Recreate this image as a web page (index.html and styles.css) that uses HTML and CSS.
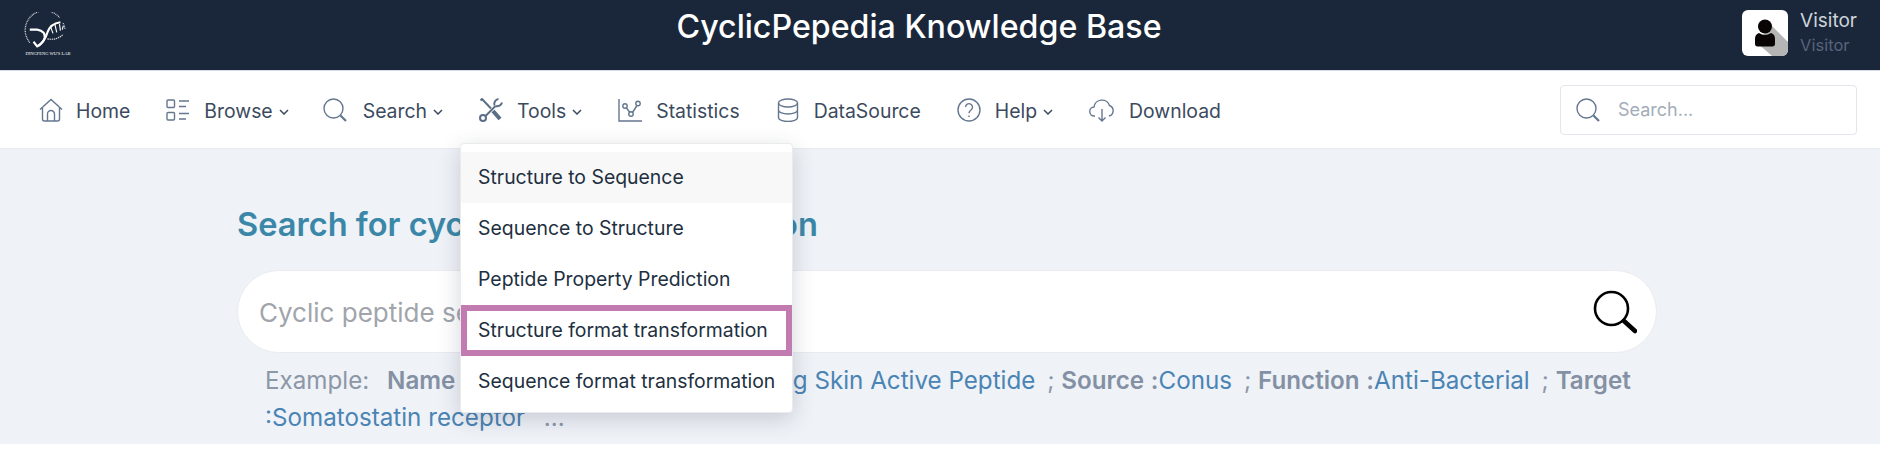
FILE: index.html

```html
<!DOCTYPE html>
<html lang="en">
<head>
  <meta charset="UTF-8">
  <title>CyclicPepedia Knowledge Base</title>
  <link rel="stylesheet" href="styles.css">
</head>
<body>
<div class="page">
  <header class="topbar">
    <div class="logo">
      <svg viewBox="0 0 52 42" width="49" height="39" fill="none" stroke="#fff">
        <path d="M8 33A20 20 0 0 1 40 6" stroke-width="1.400" stroke-dasharray="1 .8" opacity=".8"/>
        <path d="M44 12l2 6" stroke-width="1.400" stroke-dasharray="1 .8" opacity=".8"/>
        <path d="M8 19h8c6 1 9 4 8 9-1 4-4 7-8 9l-4-5" stroke-width="2.300"/>
        <path d="M16 37c5-3 9-8 11-15 2-6 6-10 14-11" stroke-width="2.300"/>
        <path d="M30 15l3 8M35 13l2 9M40 13l1 7M44 15l-1 4" stroke-width="1.200"/>
        <path d="M27 29c6 1 12 0 17-5" stroke-width="1.300" stroke-dasharray="1.500 .8" opacity=".85"/>
      </svg>
      <span class="logo-name">DingFeng Wu's LAB</span>
    </div>
    <div class="site-title">CyclicPepedia Knowledge Base</div>
    <div class="user">
      <svg class="avatar" viewBox="0 0 46 46" width="46" height="46">
        <rect width="46" height="46" rx="6" fill="#fff"/>
        <path d="M30 16 46 32V40a6 6 0 0 1-6 6H30L14 32Z" fill="#b5b5b5"/>
        <circle cx="23" cy="16.500" r="7" fill="#0a0505"/>
        <path d="M17 23c4 2.500 8 2.500 12 0 3 1 4 3 4 6v5c0 1.500-1 2.500-2.500 2.500h-15c-1.500 0-2.500-1-2.500-2.500v-5c0-3 1-5 4-6Z" fill="#0a0505"/>
      </svg>
      <div class="user-text">
        <div class="user-name">Visitor</div>
        <div class="user-role">Visitor</div>
      </div>
    </div>
  </header>

  <nav class="navbar">
    <ul class="menu">
      <li class="menu-item menu-home">
        <svg class="icon" viewBox="0 0 24 24"><path d="M1 11.500 12 1.500l11 10M3.500 10v11a2 2 0 0 0 2 2h13a2 2 0 0 0 2-2V10"/><path d="M8.500 23v-7a3.500 3.500 0 0 1 7 0v7"/></svg>
        <span>Home</span>
      </li>
      <li class="menu-item">
        <svg class="icon" viewBox="0 0 24 24"><rect x="1" y="2" width="7.500" height="7.500" rx="1"/><rect x="1" y="14.500" width="7.500" height="7.500" rx="1"/><path d="M13 3h10M13 8.500h7M13 15.500h10M13 21h7"/></svg>
        <span>Browse</span>
        <svg class="chevron" viewBox="0 0 10 6"><path d="M1 1l4 4 4-4"/></svg>
      </li>
      <li class="menu-item menu-search">
        <svg class="icon" viewBox="0 0 24 24"><circle cx="10.500" cy="10.500" r="9.500"/><path d="M17.500 17.500 23 23" stroke-width="2.200"/></svg>
        <span>Search</span>
        <svg class="chevron" viewBox="0 0 10 6"><path d="M1 1l4 4 4-4"/></svg>
      </li>
      <li class="menu-item menu-tools">
        <svg class="icon icon-tools" viewBox="0 0 24 24"><path d="M1.500 2.500 3 1l9 9.500"/><path d="M14 13l7 8" stroke-width="4"/><path d="M16.500 8 6 18.500"/><path d="M19.500 1a5 5 0 0 0-4 6.500M23 4.500a5 5 0 0 1-6.500 3.500"/><circle cx="4" cy="20" r="3"/></svg>
        <span>Tools</span>
        <svg class="chevron" viewBox="0 0 10 6"><path d="M1 1l4 4 4-4"/></svg>
        <div class="dropdown">
          <a class="dropdown-item is-hover">Structure to Sequence</a>
          <a class="dropdown-item">Sequence to Structure</a>
          <a class="dropdown-item">Peptide Property Prediction</a>
          <a class="dropdown-item is-marked">Structure format transformation</a>
          <a class="dropdown-item">Sequence format transformation</a>
        </div>
      </li>
      <li class="menu-item">
        <svg class="icon" viewBox="0 0 24 24"><path d="M1 1v22h23"/><path d="M8 9.500l4 5M14.500 14.500l4.500-7"/><circle cx="7" cy="8" r="2.200"/><circle cx="13" cy="16" r="2.200"/><circle cx="20" cy="5.500" r="2.200"/></svg>
        <span>Statistics</span>
      </li>
      <li class="menu-item">
        <svg class="icon" viewBox="0 0 24 24"><ellipse cx="12" cy="5" rx="9.500" ry="4"/><path d="M2.500 5v14.500c0 2.500 4.500 4 9.500 4s9.500-1.500 9.500-4V5M2.500 12c0 2.500 4.500 4 9.500 4s9.500-1.500 9.500-4"/></svg>
        <span>DataSource</span>
      </li>
      <li class="menu-item">
        <svg class="icon" viewBox="0 0 24 24"><circle cx="12" cy="12" r="11"/><path d="M8.500 9a3.500 3.500 0 1 1 5.500 3c-1.300 1-2 1.700-2 3.200M12 17.500v1.500"/></svg>
        <span>Help</span>
        <svg class="chevron" viewBox="0 0 10 6"><path d="M1 1l4 4 4-4"/></svg>
      </li>
      <li class="menu-item">
        <svg class="icon icon-wide" viewBox="0 0 26 24"><path d="M6 18H5.500A4.500 4.500 0 0 1 5 9a8 8 0 0 1 15.500-1.500A5.500 5.500 0 0 1 20 18"/><path d="M13 11v12M9.500 19.500 13 23l3.500-3.500"/></svg>
        <span>Download</span>
      </li>
    </ul>
    <div class="nav-search">
      <svg class="icon" viewBox="0 0 24 24"><circle cx="10.500" cy="10.500" r="9.500"/><path d="M17.500 17.500 23 23" stroke-width="2.200"/></svg>
      <span>Search...</span>
    </div>
  </nav>

  <main class="content">
    <h1 class="heading">Search for cyclic peptide information</h1>
    <div class="searchbox">
      <span class="placeholder">Cyclic peptide sequence</span>
      <svg class="search-go" viewBox="0 0 44 44" width="44" height="44" fill="none" stroke="#000">
        <circle cx="18.500" cy="18.500" r="16.500" stroke-width="2.600"/>
        <path d="M31 31 42 41" stroke-width="4.500" stroke-linecap="round"/>
      </svg>
    </div>
    <p class="examples">
      <span class="ex-label">Example:</span>
      <b>Name</b> <a class="ex-name">:Cyclic Membrane-Penetrating Skin Active Peptide</a> <span class="sep">;</span> <b>Source</b> <b>:</b><a>Conus</a> <span class="sep">;</span> <b>Function</b> <b>:</b><a>Anti-Bacterial</a> <span class="sep">;</span> <b>Target</b> <a>:Somatostatin receptor</a> <span class="more">...</span>
    </p>
  </main>
</div>
</body>
</html>
```

FILE: styles.css

```css
body {
  margin: 0;
  background: #fff;
  font-family: Inter, 'Noto Sans', sans-serif;
  overflow: hidden;
}
.page {
  width: 1880px;
  height: 444px;
  background: #eff2f7;
  overflow: hidden;
}

/* top dark bar */
.topbar {
  height: 70px;
  background: #1a273b;
  border-bottom: 1px solid #d5dde2;
  display: flex;
  align-items: center;
  justify-content: space-between;
  padding: 0 23px 0 20px;
}
.logo {
  width: 52px;
  display: flex;
  flex-direction: column;
  align-items: center;
  margin-top: -2px;
}
.logo-name {
  font-family: 'Liberation Serif', serif;
  font-size: 4.500px;
  color: #fff;
  white-space: nowrap;
  text-transform: uppercase;
  margin-left: 4px;
}
.site-title {
  flex: 1;
  text-align: center;
  font-size: 32.200px;
  font-weight: 500;
  color: #fff;
  margin-top: -17px;
  padding-left: 24px;
}
.user {
  align-self: flex-start;
  padding-top: 8px;
  display: flex;
  align-items: center;
  gap: 12px;
}
.avatar { display: block; }
.user-text { padding-top: 1px; }
.user-name {
  font-size: 19px;
  color: #ced4da;
  line-height: 24px;
}
.user-role {
  font-size: 16.500px;
  color: #56637a;
  line-height: 24px;
}

/* nav */
.navbar {
  height: 77px;
  background: #fff;
  border-bottom: 1px solid #e7eaee;
  display: flex;
  align-items: center;
  justify-content: space-between;
  padding: 0 23px 0 39px;
}
.menu {
  list-style: none;
  margin: 0;
  padding: 0;
  display: flex;
  align-items: center;
  gap: 36px;
}
.menu-item {
  position: relative;
  display: flex;
  align-items: center;
  font-size: 19.400px;
  line-height: 26px;
  color: #3c4a5e;
}
.menu-item span { padding-top: 2px; }
.menu-item .icon { margin-right: 14px; }
.menu-home .icon { margin-right: 13px; }
.menu-search .icon { margin: 0 16px 0 -2px; }
.icon {
  width: 24px;
  height: 24px;
  fill: none;
  stroke: #64778f;
  stroke-width: 1.400;
  flex: none;
}
.icon-wide { width: 26px; }
.icon-tools { stroke: #5b6e88; stroke-width: 2; }
.chevron {
  width: 10px;
  height: 6px;
  margin-left: 6px;
  margin-top: 4px;
  fill: none;
  stroke: #3c4a5e;
  stroke-width: 1.500;
}
.nav-search {
  width: 297px;
  height: 50px;
  box-sizing: border-box;
  border: 1px solid #e3e6ea;
  border-radius: 4px;
  display: flex;
  align-items: center;
  gap: 18px;
  padding-left: 15px;
  font-size: 18px;
  color: #a3acb9;
}

/* tools dropdown */
.dropdown {
  position: absolute;
  left: -19px;
  top: 47px;
  width: 333px;
  box-sizing: border-box;
  padding: 8px 0 5px;
  background: #fff;
  border: 1px solid #e9ebec;
  border-radius: 4px;
  box-shadow: 0 6px 22px rgba(40, 50, 70, 0.2);
  z-index: 5;
}
.dropdown-item {
  display: block;
  height: 51px;
  line-height: 51px;
  box-sizing: border-box;
  padding-left: 17px;
  font-size: 19.400px;
  color: #212f3f;
  white-space: nowrap;
}
.is-hover { background: #f8f8f9; }
.is-marked {
  border: 6px solid #c27bb0;
  line-height: 39px;
  padding-left: 11px;
}

/* search area */
.content {
  padding: 0 0 0 237px;
}
.heading {
  margin: 0;
  padding-top: 55px;
  font-size: 32.600px;
  line-height: 40px;
  font-weight: 600;
  color: #3b87a8;
}
.searchbox {
  margin-top: 26px;
  width: 1420px;
  height: 83px;
  box-sizing: border-box;
  background: #fff;
  border: 1px solid #e9ebf0;
  border-radius: 42px;
  display: flex;
  align-items: center;
  justify-content: space-between;
  padding: 0 19px 0 21px;
}
.placeholder {
  font-size: 26px;
  padding-top: 2px;
  color: #a1a5ab;
}
.examples {
  margin: 9px 0 0;
  width: 1420px;
  padding-left: 28px;
  box-sizing: border-box;
  font-size: 24.200px;
  line-height: 37px;
  color: #8c97a8;
}
.examples a { color: #4a84b4; }
.examples b { font-weight: 600; color: #8490a3; }
.ex-label { margin-right: 11px; }
.examples .ex-name { margin-left: -4px; }
.sep { margin-left: 5px; }
.more { margin-left: 12px; }
```
